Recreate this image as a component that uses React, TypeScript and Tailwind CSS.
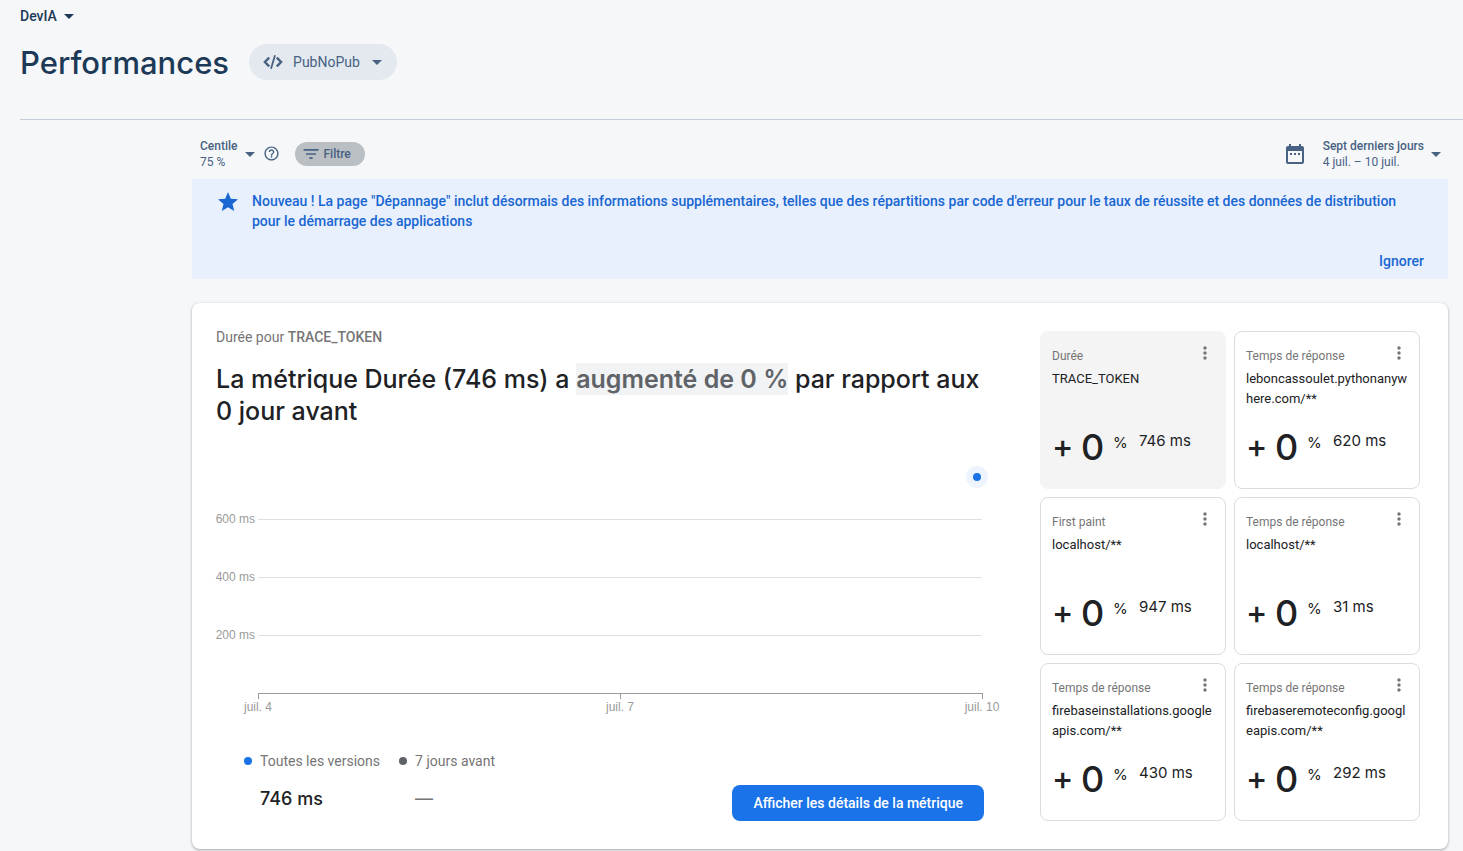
import {
  MdArrowDropDown,
  MdDateRange,
  MdFilterList,
  MdHelpOutline,
  MdMoreVert,
  MdStar,
} from 'react-icons/md';

type Metric = {
  label: string;
  name: string;
  value: string;
  selected?: boolean;
};

const metrics: Metric[] = [
  { label: 'Durée', name: 'TRACE_TOKEN', value: '746 ms', selected: true },
  { label: 'Temps de réponse', name: 'leboncassoulet.pythonanywhere.com/**', value: '620 ms' },
  { label: 'First paint', name: 'localhost/**', value: '947 ms' },
  { label: 'Temps de réponse', name: 'localhost/**', value: '31 ms' },
  { label: 'Temps de réponse', name: 'firebaseinstallations.googleapis.com/**', value: '430 ms' },
  { label: 'Temps de réponse', name: 'firebaseremoteconfig.googleapis.com/**', value: '292 ms' },
];

const gridLines = [
  { label: '600 ms', y: 92 },
  { label: '400 ms', y: 150 },
  { label: '200 ms', y: 208 },
];

const dates = [
  { label: 'juil. 4', x: '0%' },
  { label: 'juil. 7', x: '50%' },
  { label: 'juil. 10', x: '100%' },
];

function CodeIcon() {
  return (
    <svg viewBox="0 0 20 14" className="h-3.5 w-5" fill="none" stroke="currentColor" aria-hidden="true">
      <path strokeWidth="2.4" d="M6.2 2.6 1.9 7l4.3 4.4M13.8 2.6 18.1 7l-4.3 4.4" />
      <path strokeWidth="1.8" d="M12 .3 8 13.7" />
    </svg>
  );
}

function Header() {
  return (
    <header className="pl-5">
      <div className="flex h-8 items-center">
        <button className="flex items-center text-sm font-medium text-[#1c3a57]">
          DevIA
          <MdArrowDropDown className="size-6" />
        </button>
      </div>
      <div className="flex h-[88px] items-start gap-5 border-b border-[#c3ced9] pt-3">
        <h1 className="font-['Inter',sans-serif] text-[31px] leading-[38px] font-medium text-[#1c3a57]">Performances</h1>
        <button className="flex h-9 items-center rounded-full bg-[#e4e9f0] pr-2 pl-3.5 text-sm text-[#476282]">
          <CodeIcon />
          <span className="mr-[5px] ml-2.5">PubNoPub</span>
          <MdArrowDropDown className="size-6" />
        </button>
      </div>
    </header>
  );
}

function Toolbar() {
  return (
    <div className="flex h-[59px] items-center pt-2 pl-2 text-xs leading-4 text-[#476282]">
      <button className="flex items-center gap-px text-left">
        <span>
          <span className="block font-medium">Centile</span>
          <span className="block">75 %</span>
        </span>
        <MdArrowDropDown className="size-6" />
      </button>
      <button className="ml-px" aria-label="Aide">
        <MdHelpOutline className="size-[17px]" />
      </button>
      <button className="ml-[15px] flex h-6 items-center gap-0.5 rounded-full bg-[#babfc4] pr-3.5 pl-1.5 font-medium">
        <MdFilterList className="size-5" />
        Filtre
      </button>
      <button className="ml-auto flex items-center text-left">
        <MdDateRange className="mr-4 size-6" />
        <span>
          <span className="block font-medium">Sept derniers jours</span>
          <span className="block">4 juil. – 10 juil.</span>
        </span>
        <MdArrowDropDown className="size-6" />
      </button>
    </div>
  );
}

function Notice() {
  return (
    <section className="bg-[#e8f0fe] px-6 pt-3 pb-2 text-sm leading-5 font-medium text-[#1967d2]">
      <div className="flex gap-3">
        <MdStar className="-mt-px size-6 shrink-0" />
        <p>
          Nouveau ! La page "Dépannage" inclut désormais des informations supplémentaires, telles que des répartitions
          par code d'erreur pour le taux de réussite et des données de distribution pour le démarrage des applications
        </p>
      </div>
      <div className="mt-5 flex justify-end">
        <button>Ignorer</button>
      </div>
    </section>
  );
}

function DurationChart() {
  return (
    <div className="mr-0.5 ml-[42px]">
      <svg className="block h-[292px] w-full overflow-visible text-xs" role="img" aria-label="Durée par jour">
        {gridLines.map((line) => (
          <g key={line.y}>
            <line x1="0" x2="100%" y1={line.y + 0.5} y2={line.y + 0.5} stroke="#e0e0e0" />
            <text x="-3" y={line.y + 4} textAnchor="end" fill="#9a9a9a" className="font-['Liberation_Sans',sans-serif]">
              {line.label}
            </text>
          </g>
        ))}
        <line x1="0" x2="100%" y1="266.5" y2="266.5" stroke="#9a9a9a" />
        {dates.map((date) => (
          <svg key={date.label} x={date.x} className="overflow-visible">
            <line x1="0.5" x2="0.5" y1="266" y2="272" stroke="#9a9a9a" />
            <text x="0" y="284" textAnchor="middle" fill="#9a9a9a" className="font-['Liberation_Sans',sans-serif]">
              {date.label}
            </text>
          </svg>
        ))}
        <svg x="100%" className="overflow-visible">
          <circle cx="-5" cy="50" r="11" fill="#eef4fe" />
          <circle cx="-5" cy="50" r="4" fill="#1a73e8" />
        </svg>
      </svg>
    </div>
  );
}

function MetricCard({ metric }: { metric: Metric }) {
  return (
    <article
      className={
        metric.selected
          ? 'flex h-[158px] flex-col rounded-lg border border-[#f4f4f4] bg-[#f4f4f4] pl-[11px]'
          : 'flex h-[158px] flex-col rounded-lg border border-[#dadce0] bg-white pl-[11px]'
      }
    >
      <div className="flex items-start justify-between pt-[11px] pr-2.5 text-[#757575]">
        <h3 className="pt-[5px] text-xs leading-4">{metric.label}</h3>
        <button aria-label="Plus d'options">
          <MdMoreVert className="size-5" />
        </button>
      </div>
      <p className="mt-[5px] mr-2 h-10 text-[13px] leading-5 break-all text-[#202124]">{metric.name}</p>
      <div className="mt-4 flex items-start font-['Inter',sans-serif] text-[#202124]">
        <span className="w-[29px] pt-0.5 text-[32px] leading-10 font-medium">+</span>
        <span className="w-8 text-4xl leading-[44px] font-medium">0</span>
        <span className="w-[26px] pt-1.5 text-[15px] leading-6">%</span>
        <span className="pt-1 text-[15px] leading-6">{metric.value}</span>
      </div>
    </article>
  );
}

export default function App() {
  return (
    <div className="min-h-screen bg-[#f6f7f9] font-['Roboto',sans-serif]">
      <Header />
      <main className="pr-[15px] pl-48">
        <Toolbar />
        <Notice />
        <section className="mt-6 flex gap-14 rounded-lg bg-white pr-7 pl-6 shadow-[0_1px_3px_rgba(0,0,0,0.35)]">
          <div className="flex min-w-0 flex-1 flex-col pt-6 pb-7">
            <p className="text-sm leading-5 text-[#757575]">
              Durée pour <span className="font-medium">TRACE_TOKEN</span>
            </p>
            <h2 className="mt-4 font-['Inter',sans-serif] text-[25px] leading-8 font-medium text-[#202124]">
              La métrique Durée (746 ms) a{' '}
              <span className="bg-[#f1f3f4] py-px font-semibold text-[#5f6368]">augmenté de 0 %</span> par rapport aux 0 jour
              avant
            </h2>
            <DurationChart />
            <div className="mt-8 flex items-end justify-between pl-7">
              <dl className="flex gap-[19px] text-sm leading-5 text-[#757575]">
                <div>
                  <dt className="flex items-center gap-2">
                    <span className="size-2 rounded-full bg-[#1a73e8]" />
                    Toutes les versions
                  </dt>
                  <dd className="pt-2 pb-0.5 pl-4 font-['Inter',sans-serif] text-lg leading-10 font-medium text-[#202124]">
                    746 ms
                  </dd>
                </div>
                <div>
                  <dt className="flex items-center gap-2">
                    <span className="size-2 rounded-full bg-[#5f6368]" />
                    7 jours avant
                  </dt>
                  <dd className="pt-2 pb-0.5 pl-4 font-['Inter',sans-serif] text-lg leading-10">—</dd>
                </div>
              </dl>
              <button className="h-9 rounded-lg bg-[#1a73e8] px-[21px] text-sm font-medium text-white">
                Afficher les détails de la métrique
              </button>
            </div>
          </div>
          <div className="grid w-[380px] shrink-0 grid-cols-2 content-start gap-2 py-7">
            {metrics.map((metric) => (
              <MetricCard key={metric.label + metric.name} metric={metric} />
            ))}
          </div>
        </section>
      </main>
    </div>
  );
}
